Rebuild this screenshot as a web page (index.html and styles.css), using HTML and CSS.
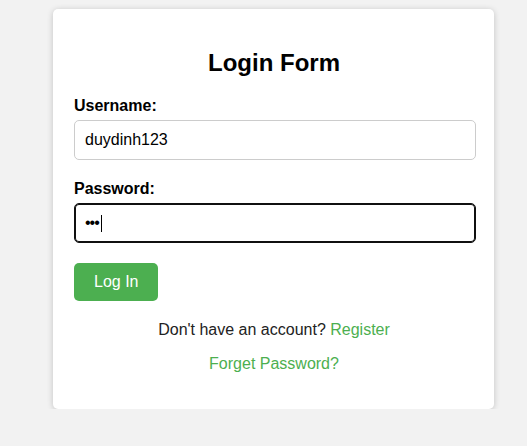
FILE: index.html
```html
<!DOCTYPE html>
<html lang="en">
<head>
<meta charset="utf-8">
<title>Login Form</title>
<link rel="stylesheet" href="styles.css">
</head>
<body>
<div class="card">
  <h2 class="title">Login Form</h2>
  <form class="form">
    <label class="label" for="username">Username:</label>
    <input class="field" id="username" type="text" value="duydinh123">
    <label class="label" for="password">Password:</label>
    <div class="field-wrap">
      <input class="field field-focus" id="password" type="password" value="abc">
      <span class="caret"></span>
    </div>
    <button class="btn" type="button">Log In</button>
  </form>
  <p class="note first">Don't have an account? <a class="link" href="#">Register</a></p>
  <p class="note"><a class="link" href="#">Forget Password?</a></p>
</div>
</body>
</html>
```
FILE: styles.css
```css
html, body {
  margin: 0;
  padding: 0;
  background: #f2f2f2;
  font-family: "Liberation Sans", Arial, sans-serif;
}
body {
  padding-top: 9px;
}
.card {
  box-sizing: border-box;
  width: 441px;
  margin-left: 53px;
  padding: 20px 18px 20px 21px;
  background: #fff;
  border-radius: 5px;
  box-shadow: 0 1px 6px rgba(0, 0, 0, 0.2);
}
.title {
  margin: 20px 2px 20px 0;
  font-size: 24px;
  font-weight: bold;
  text-align: center;
  color: #000;
}
.form {
  display: flex;
  flex-direction: column;
  align-items: flex-start;
}
.label {
  display: block;
  font-size: 16px;
  font-weight: bold;
  color: #000;
  margin-bottom: 5px;
}
.field {
  box-sizing: border-box;
  width: 402px;
  height: 40px;
  padding: 10px;
  margin: 0 0 20px 0;
  font-family: "Liberation Sans", Arial, sans-serif;
  font-size: 16px;
  color: #000;
  border: 1px solid #ccc;
  border-radius: 5px;
  background: #fff;
  outline: none;
}
.field-wrap {
  position: relative;
}
.field-focus {
  border: 1px solid #101010;
  box-shadow: inset 0 0 0 1px #101010;
  letter-spacing: -1px;
}
.caret {
  position: absolute;
  left: 27px;
  top: 12px;
  width: 1px;
  height: 17px;
  background: #000;
}
.btn {
  padding: 10px 20px;
  font-family: "Liberation Sans", Arial, sans-serif;
  font-size: 16px;
  color: #fff;
  background: #4caf50;
  border: none;
  border-radius: 5px;
}
.note {
  margin: 16px 2px 16px 0;
  font-size: 16px;
  color: #222;
  text-align: center;
}
.note.first {
  margin-top: 20px;
}
.link {
  color: #4caf50;
  text-decoration: none;
}
```
